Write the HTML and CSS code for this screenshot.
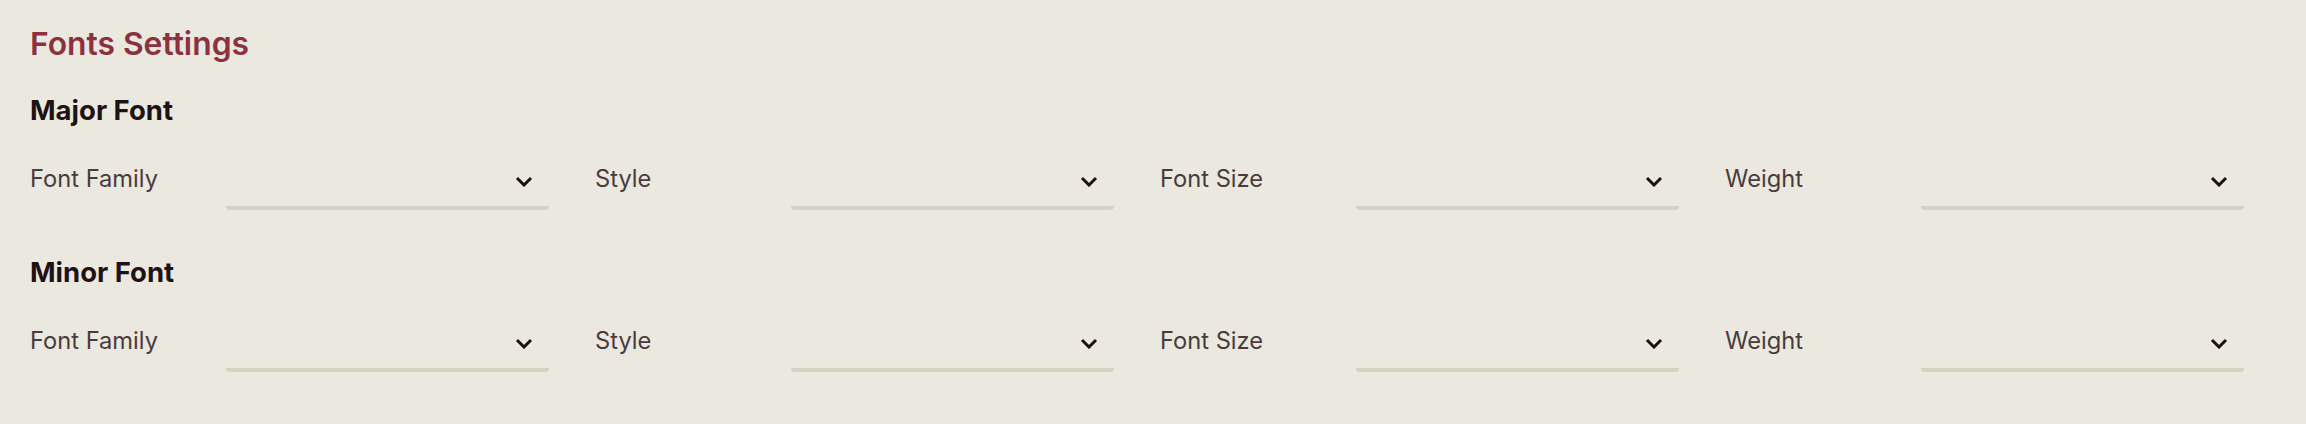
FILE: index.html
```html
<!DOCTYPE html>
<html lang="en">
<head>
<meta charset="utf-8">
<title>Fonts Settings</title>
<link rel="stylesheet" href="styles.css">
</head>
<body>
<div class="page">
  <h1 class="title">Fonts Settings</h1>

  <section class="group">
    <h2 class="group-title">Major Font</h2>
    <div class="fields">
      <div class="field"><span class="label">Font Family</span><div class="select"><svg class="chev" width="18" height="11" viewBox="0 0 18 11"><polyline points="2,2 9,9 16,2" fill="none" stroke="#1e1012" stroke-width="3"/></svg></div></div>
      <div class="field"><span class="label">Style</span><div class="select"><svg class="chev" width="18" height="11" viewBox="0 0 18 11"><polyline points="2,2 9,9 16,2" fill="none" stroke="#1e1012" stroke-width="3"/></svg></div></div>
      <div class="field"><span class="label">Font Size</span><div class="select"><svg class="chev" width="18" height="11" viewBox="0 0 18 11"><polyline points="2,2 9,9 16,2" fill="none" stroke="#1e1012" stroke-width="3"/></svg></div></div>
      <div class="field"><span class="label">Weight</span><div class="select"><svg class="chev" width="18" height="11" viewBox="0 0 18 11"><polyline points="2,2 9,9 16,2" fill="none" stroke="#1e1012" stroke-width="3"/></svg></div></div>
    </div>
  </section>

  <section class="group">
    <h2 class="group-title">Minor Font</h2>
    <div class="fields">
      <div class="field"><span class="label">Font Family</span><div class="select"><svg class="chev" width="18" height="11" viewBox="0 0 18 11"><polyline points="2,2 9,9 16,2" fill="none" stroke="#1e1012" stroke-width="3"/></svg></div></div>
      <div class="field"><span class="label">Style</span><div class="select"><svg class="chev" width="18" height="11" viewBox="0 0 18 11"><polyline points="2,2 9,9 16,2" fill="none" stroke="#1e1012" stroke-width="3"/></svg></div></div>
      <div class="field"><span class="label">Font Size</span><div class="select"><svg class="chev" width="18" height="11" viewBox="0 0 18 11"><polyline points="2,2 9,9 16,2" fill="none" stroke="#1e1012" stroke-width="3"/></svg></div></div>
      <div class="field"><span class="label">Weight</span><div class="select"><svg class="chev" width="18" height="11" viewBox="0 0 18 11"><polyline points="2,2 9,9 16,2" fill="none" stroke="#1e1012" stroke-width="3"/></svg></div></div>
    </div>
  </section>
</div>
</body>
</html>
```

FILE: styles.css
```css
html, body {
  margin: 0;
  padding: 0;
  background: #ebe8df;
}

body {
  font-family: Inter, "Noto Sans", sans-serif;
  width: 2306px;
  height: 424px;
  overflow: hidden;
}

.page {
  padding: 26px 30px 0 30px;
}

.title {
  margin: 0;
  font-size: 31.8px;
  line-height: 36px;
  font-weight: 600;
  color: #8b3140;
}

.group {
  margin-top: 32px;
}

.group + .group {
  margin-top: 46px;
}

.group-title {
  margin: 0;
  font-size: 27.5px;
  line-height: 32px;
  font-weight: 700;
  color: #1f1214;
}

.fields {
  margin-top: 36px;
  display: grid;
  grid-template-columns: repeat(4, 519px);
  column-gap: 46px;
}

.field {
  display: grid;
  grid-template-columns: 196px 323px;
  align-items: start;
}

.label {
  padding-top: 2px;
  font-size: 23.7px;
  line-height: 30px;
  color: #4a3b3d;
}

.select {
  height: 38px;
  padding: 0 16px 6px 0;
  box-sizing: content-box;
  border-bottom: 4px solid #d4d2c1;
  border-radius: 0 0 4px 4px;
  display: flex;
  align-items: center;
  justify-content: flex-end;
}

.chev {
  display: block;
}
```
